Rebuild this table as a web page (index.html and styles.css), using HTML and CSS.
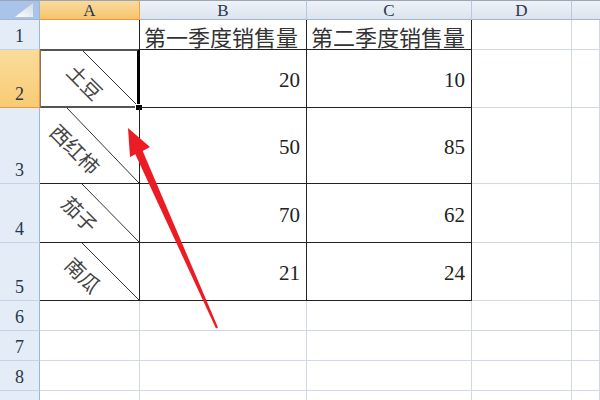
FILE: index.html
```html
<!DOCTYPE html>
<html>
<head>
<meta charset="utf-8">
<link rel="stylesheet" href="styles.css">
</head>
<body>
<div class="sheet">
  <div class="corner"><svg width="40" height="20" viewBox="0 0 40 20"><defs><linearGradient id="cg" x1="0" y1="1" x2="1" y2="0"><stop offset="0" stop-color="#ffffff"/><stop offset="1" stop-color="#d2d8e2"/></linearGradient></defs><polygon points="15,16 33,2 33,16" fill="url(#cg)"/></svg></div>
  <div class="ch sel-col">A</div>
  <div class="ch">B</div>
  <div class="ch">C</div>
  <div class="ch">D</div>
  <div class="ch last"></div>

  <div class="rh">1</div>
  <div class="c tb"></div>
  <div class="c tb head">第一季度销售量</div>
  <div class="c tb head">第二季度销售量</div>
  <div class="c"></div>
  <div class="c"></div>

  <div class="rh sel-row">2</div>
  <div class="c tb diag">
    <svg class="dl" width="100" height="58" viewBox="0 0 100 58"><line x1="42" y1="0" x2="99" y2="57" stroke="#333" stroke-width="1"/></svg>
    <span class="lab" style="left:45px;top:32px">土豆</span>
    <div class="selbox"><span class="handle"></span></div>
  </div>
  <div class="c tb num">20</div>
  <div class="c tb num">10</div>
  <div class="c"></div>
  <div class="c"></div>

  <div class="rh">3</div>
  <div class="c tb diag">
    <svg class="dl" width="100" height="76" viewBox="0 0 100 76"><line x1="27" y1="0" x2="99" y2="75" stroke="#333" stroke-width="1"/></svg>
    <span class="lab" style="left:35px;top:41px">西红柿</span>
  </div>
  <div class="c tb num">50</div>
  <div class="c tb num">85</div>
  <div class="c"></div>
  <div class="c"></div>

  <div class="rh">4</div>
  <div class="c tb diag">
    <svg class="dl" width="100" height="59" viewBox="0 0 100 59"><line x1="42" y1="0" x2="99" y2="58" stroke="#333" stroke-width="1"/></svg>
    <span class="lab" style="left:40px;top:30px">茄子</span>
  </div>
  <div class="c tb num">70</div>
  <div class="c tb num">62</div>
  <div class="c"></div>
  <div class="c"></div>

  <div class="rh">5</div>
  <div class="c tb diag">
    <svg class="dl" width="100" height="58" viewBox="0 0 100 58"><line x1="42" y1="0" x2="99" y2="57" stroke="#333" stroke-width="1"/></svg>
    <span class="lab" style="left:43px;top:32px">南瓜</span>
  </div>
  <div class="c tb num">21</div>
  <div class="c tb num">24</div>
  <div class="c"></div>
  <div class="c"></div>

  <div class="rh">6</div>
  <div class="c"></div><div class="c"></div><div class="c"></div><div class="c"></div><div class="c"></div>
  <div class="rh">7</div>
  <div class="c"></div><div class="c"></div><div class="c"></div><div class="c"></div><div class="c"></div>
  <div class="rh">8</div>
  <div class="c"></div><div class="c"></div><div class="c"></div><div class="c"></div><div class="c"></div>
  <div class="rh"></div>
  <div class="c"></div><div class="c"></div><div class="c"></div><div class="c"></div><div class="c"></div>
</div>
<svg class="arrow" width="600" height="400" viewBox="0 0 600 400">
  <polygon points="128,128 150,147 142.7,151 218,327.5 216,328.5 135.3,154.3 130,157" fill="#ec1c24"/>
</svg>
</body>
</html>
```
FILE: styles.css
```css
html, body {
  margin: 0;
  padding: 0;
  width: 600px;
  height: 400px;
  overflow: hidden;
  background: #fff;
}
.sheet {
  display: grid;
  grid-template-columns: 40px 100px 167px 165px 100px 28px;
  grid-template-rows: 20px 30px 58px 76px 59px 58px 30px 30px 30px 30px;
  width: 600px;
  height: 400px;
  overflow: hidden;
}
.sheet > div {
  box-sizing: border-box;
}
.corner {
  background: #a9c4e8;
  border-top: 1px solid #9aa6b4;
  border-right: 1px solid #9eb6ce;
  border-bottom: 1px solid #9eb6ce;
  overflow: hidden;
}
.corner svg { display: block; }
.ch {
  background: linear-gradient(#eef2f8, #dce4ef);
  border-top: 1px solid #9aa6b4;
  border-right: 1px solid #b8c9dd;
  border-bottom: 1px solid #9eb6ce;
  font-family: "Liberation Serif", serif;
  font-size: 17px;
  color: #27354d;
  display: flex;
  align-items: center;
  justify-content: center;
  line-height: 1;
}
.ch.sel-col {
  background: linear-gradient(#f9da9f, #f6c56c);
  border-right-color: #f0a24a;
  border-bottom-color: #f29436;
}
.ch.last { border-right: none; }
.rh {
  background: #e4ecf7;
  border-right: 1px solid #9eb6ce;
  border-bottom: 1px solid #c5d3e3;
  font-family: "Liberation Serif", serif;
  font-size: 18px;
  color: #27354d;
  display: flex;
  align-items: flex-end;
  justify-content: center;
  padding-bottom: 4px;
  line-height: 1;
}
.rh.sel-row {
  background: linear-gradient(#fbdc9c, #f8cb74);
  border-bottom-color: #f29436;
  border-right-color: #f29436;
}
.c {
  border-right: 1px solid #d0d7e5;
  border-bottom: 1px solid #d0d7e5;
  position: relative;
}
.c.tb {
  border-right-color: #222;
  border-bottom-color: #222;
}
.head {
  font-family: "Noto Sans CJK SC", sans-serif;
  font-size: 22px;
  line-height: 26px;
  color: #333;
  display: flex;
  align-items: flex-end;
  padding-left: 4px;
  padding-bottom: 0;
  white-space: nowrap;
}
.num {
  font-family: "Liberation Serif", serif;
  font-size: 21px;
  color: #222;
  display: flex;
  align-items: center;
  justify-content: flex-end;
  padding-right: 6px;
  padding-top: 4px;
  line-height: 1;
}
.dl {
  position: absolute;
  left: 0;
  top: 0;
  display: block;
}
.lab {
  position: absolute;
  font-family: "Noto Sans CJK SC", sans-serif;
  font-size: 20px;
  line-height: 1;
  color: #444;
  white-space: nowrap;
  transform: translate(-50%, -50%) rotate(45deg);
}
.selbox {
  position: absolute;
  left: 0;
  top: -1px;
  right: -1px;
  bottom: -1px;
  border-top: 2px solid #555;
  border-bottom: 2px solid #555;
  border-left: 1px solid #777;
  border-right: 3px solid #000;
}
.handle {
  position: absolute;
  right: -6px;
  bottom: -5px;
  width: 6px;
  height: 5px;
  background: #000;
  border: 1px solid #fff;
}
.arrow {
  position: absolute;
  left: 0;
  top: 0;
  pointer-events: none;
}
```
